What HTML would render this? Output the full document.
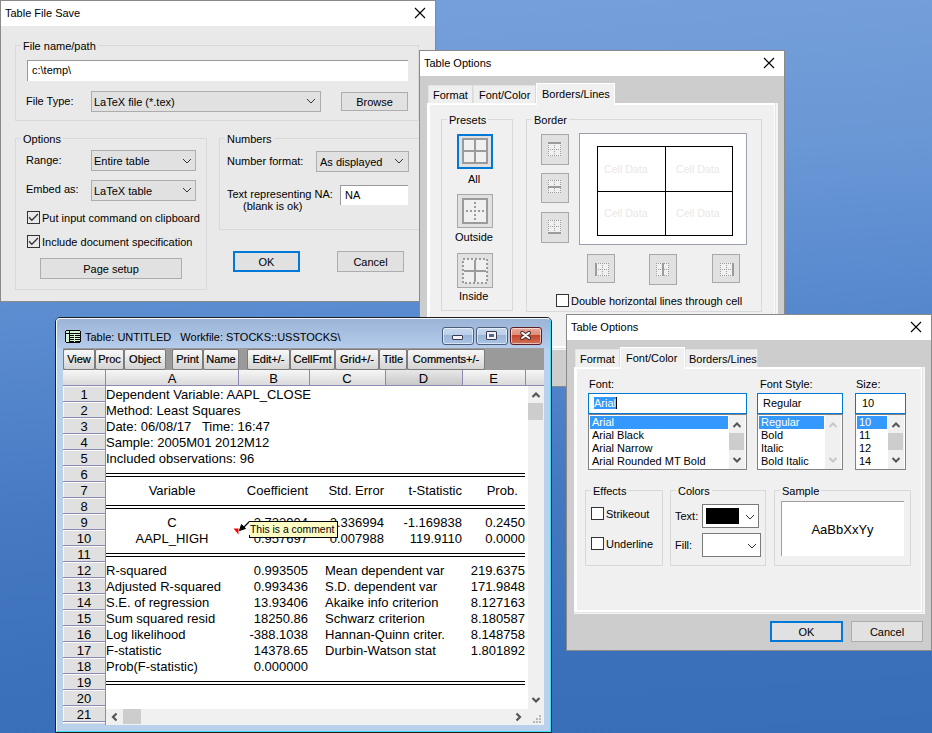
<!DOCTYPE html>
<html><head><meta charset="utf-8">
<style>
*{margin:0;padding:0;box-sizing:border-box}
html,body{width:932px;height:733px;overflow:hidden}
body{position:relative;font-family:"Liberation Sans",sans-serif;font-size:11px;color:#000;
background:linear-gradient(176deg,#77a1db 0%,#6a97d5 25%,#5a8bd0 42%,#4579c2 65%,#3b71bb 85%,#386eb8 100%)}
.a{position:absolute}
.t{position:absolute;white-space:pre;line-height:13px;font-size:11px}
.win{position:absolute;border:1px solid #8a8a8a;background:#e9e9e9}
.ttl{position:absolute;left:0;top:0;right:0;height:25px;background:#fff}
.grp{position:absolute;border:1px solid #d9d9d9}
.glab{position:absolute;white-space:pre;line-height:13px;font-size:11px;padding:0 2px;background:inherit}
.btn{position:absolute;background:#e1e1e1;border:1px solid #adadad;text-align:center;line-height:21px;font-size:11px;white-space:pre}
.def{border:2px solid #0078d7;line-height:19px}
.cmb{position:absolute;background:#e1e1e1;border:1px solid #adadad;white-space:pre;line-height:20px;font-size:11px;padding-left:2px}
.edt{position:absolute;background:#fff;border-top:1px solid #9a9a9a;border-left:1px solid #9a9a9a;white-space:pre;line-height:19px;font-size:11px}
.chk{position:absolute;width:13px;height:13px;border:1px solid #333;background:#fff}
.chev{position:absolute}
</style></head><body>

<!-- ============ Dialog 1: Table File Save ============ -->
<div class="win" style="left:0;top:0;width:436px;height:302px"></div>
<div class="a" style="left:1px;top:1px;width:434px;height:25px;background:#fff"></div>
<div class="t" style="left:5px;top:7px">Table File Save</div>
<svg class="a" style="left:414px;top:7px" width="12" height="12"><path d="M1 1L11 11M11 1L1 11" stroke="#000" stroke-width="1.1"/></svg>

<div class="grp" style="left:15px;top:45px;width:404px;height:76px"></div>
<div class="t" style="left:21px;top:40px;background:#e9e9e9;padding:0 2px">File name/path</div>
<div class="edt" style="left:27px;top:60px;width:381px;height:21px;padding-left:4px">c:\temp\</div>
<div class="t" style="left:26px;top:95px">File Type:</div>
<div class="cmb" style="left:91px;top:91px;width:230px;height:21px">LaTeX file (*.tex)</div>

<div class="btn" style="left:341px;top:92px;width:67px;height:19px;line-height:19px">Browse</div>

<div class="grp" style="left:15px;top:138px;width:192px;height:152px"></div>
<div class="t" style="left:21px;top:133px;background:#e9e9e9;padding:0 2px">Options</div>
<div class="t" style="left:26px;top:154px">Range:</div>
<div class="cmb" style="left:91px;top:150px;width:105px;height:21px">Entire table</div>
<div class="t" style="left:26px;top:183px">Embed as:</div>
<div class="cmb" style="left:91px;top:180px;width:105px;height:21px">LaTeX table</div>
<div class="chk" style="left:27px;top:211px;background:transparent"></div><svg class="a" style="left:27px;top:211px" width="13" height="13"><path d="M2 6.3L4.8 9.2L11 3" fill="none" stroke="#333" stroke-width="1.3"/></svg>
<div class="t" style="left:42px;top:212px">Put input command on clipboard</div>
<div class="chk" style="left:27px;top:235px;background:transparent"></div><svg class="a" style="left:27px;top:235px" width="13" height="13"><path d="M2 6.3L4.8 9.2L11 3" fill="none" stroke="#333" stroke-width="1.3"/></svg>
<div class="t" style="left:42px;top:236px">Include document specification</div>
<div class="btn" style="left:40px;top:258px;width:142px;height:21px">Page setup</div>

<div class="grp" style="left:219px;top:138px;width:220px;height:92px"></div>
<div class="t" style="left:225px;top:133px;background:#e9e9e9;padding:0 2px">Numbers</div>
<div class="t" style="left:227px;top:155px">Number format:</div>
<div class="cmb" style="left:316px;top:151px;width:93px;height:21px;padding-left:3px">As displayed</div>
<div class="t" style="left:227px;top:188px">Text representing NA:</div>
<div class="t" style="left:243px;top:200px">(blank is ok)</div>
<div class="edt" style="left:340px;top:185px;width:68px;height:20px;padding-left:4px">NA</div>
<svg class="a" style="left:306px;top:98px" width="10" height="6"><path d="M1 1L5 5L9 1" fill="none" stroke="#333" stroke-width="1"/></svg><svg class="a" style="left:182px;top:158px" width="10" height="6"><path d="M1 1L5 5L9 1" fill="none" stroke="#333" stroke-width="1"/></svg><svg class="a" style="left:182px;top:187px" width="10" height="6"><path d="M1 1L5 5L9 1" fill="none" stroke="#333" stroke-width="1"/></svg><svg class="a" style="left:394px;top:158px" width="10" height="6"><path d="M1 1L5 5L9 1" fill="none" stroke="#333" stroke-width="1"/></svg>
<div class="btn def" style="left:233px;top:251px;width:67px;height:21px">OK</div>
<div class="btn" style="left:337px;top:251px;width:67px;height:21px">Cancel</div>


<!-- ============ Dialog 2: Table Options (Borders/Lines) ============ -->
<div class="win" style="left:419px;top:50px;width:366px;height:337px;background:#cdcdcd"></div>
<div class="a" style="left:420px;top:51px;width:364px;height:25px;background:#fff"></div>
<div class="t" style="left:424px;top:57px">Table Options</div>
<svg class="a" style="left:763px;top:57px" width="12" height="12"><path d="M1 1L11 11M11 1L1 11" stroke="#000" stroke-width="1.1"/></svg>
<!-- tabs -->
<div class="a" style="left:427px;top:103px;width:351px;height:247px;background:#f5f5f5"></div>
<div class="a" style="left:427px;top:103px;width:349px;height:246px;background:#e3e3e3"></div>
<div class="a" style="left:427px;top:103px;width:348px;height:245px;background:#fff"></div>
<div class="a" style="left:430px;top:105px;width:344px;height:241px;background:#f0f0f0"></div>
<div class="a" style="left:428px;top:85px;width:45px;height:18px;background:#efefef;border-left:1px solid #e3e3e3;border-top:1px solid #e3e3e3;border-right:1px solid #d9d9d9"></div>
<div class="t" style="left:433px;top:89px">Format</div>
<div class="a" style="left:473px;top:85px;width:63px;height:18px;background:#efefef;border-left:1px solid #e3e3e3;border-top:1px solid #e3e3e3;border-right:1px solid #d9d9d9"></div>
<div class="t" style="left:479px;top:89px">Font/Color</div>
<div class="a" style="left:536px;top:83px;width:79px;height:22px;background:#f0f0f0;border:1px solid #fff;border-bottom:none"></div>
<div class="t" style="left:542px;top:88px">Borders/Lines</div>

<div class="grp" style="left:441px;top:119px;width:72px;height:192px"></div>
<div class="t" style="left:447px;top:114px;background:#f0f0f0;padding:0 2px">Presets</div>
<div class="grp" style="left:526px;top:119px;width:236px;height:193px"></div>
<div class="t" style="left:532px;top:114px;background:#f0f0f0;padding:0 2px">Border</div>

<!-- presets -->
<div class="a" style="left:457px;top:134px;width:36px;height:35px;border:2px solid #0078d7;background:#e1e1e1"></div>
<svg class="a" style="left:462px;top:138px" width="26" height="26"><rect x="1" y="1" width="24" height="24" fill="#f0f0f0" stroke="#9b9b9b" stroke-width="2"/><path d="M13 1V25M1 13H25" stroke="#9b9b9b" stroke-width="2"/></svg>
<div class="t" style="left:468px;top:173px">All</div>
<div class="a" style="left:457px;top:194px;width:36px;height:34px;border:1px solid #a8a8a8;background:#e1e1e1"></div>
<svg class="a" style="left:462px;top:198px" width="26" height="26"><rect x="1" y="1" width="24" height="24" fill="#f0f0f0" stroke="#9b9b9b" stroke-width="2"/><path d="M13 4V22M4 13H22" stroke="#9b9b9b" stroke-width="2" stroke-dasharray="2 2"/></svg>
<div class="t" style="left:455px;top:231px">Outside</div>
<div class="a" style="left:457px;top:253px;width:36px;height:35px;border:1px solid #a8a8a8;background:#e1e1e1"></div>
<svg class="a" style="left:462px;top:258px" width="26" height="26"><rect x="1" y="1" width="24" height="24" fill="#f0f0f0" stroke="#9b9b9b" stroke-width="2" stroke-dasharray="2 2"/><path d="M13 2V24M2 13H24" stroke="#9b9b9b" stroke-width="2"/></svg>
<div class="t" style="left:459px;top:290px">Inside</div>

<!-- border buttons -->
<div class="a" style="left:541px;top:134px;width:28px;height:31px;border:1px solid #a8a8a8;background:#e1e1e1"></div><svg class="a" style="left:544px;top:139px" width="22" height="22"><g transform="translate(4,4)" fill="#9b9b9b"><rect x="0" y="0" width="13" height="13" fill="#f0f0f0"/><rect x="0" y="0" width="1" height="1"/><rect x="0" y="2" width="1" height="1"/><rect x="0" y="4" width="1" height="1"/><rect x="0" y="6" width="1" height="1"/><rect x="0" y="8" width="1" height="1"/><rect x="0" y="10" width="1" height="1"/><rect x="0" y="12" width="1" height="1"/><rect x="2" y="0" width="1" height="1"/><rect x="2" y="6" width="1" height="1"/><rect x="2" y="12" width="1" height="1"/><rect x="4" y="0" width="1" height="1"/><rect x="4" y="6" width="1" height="1"/><rect x="4" y="12" width="1" height="1"/><rect x="6" y="0" width="1" height="1"/><rect x="6" y="2" width="1" height="1"/><rect x="6" y="4" width="1" height="1"/><rect x="6" y="6" width="1" height="1"/><rect x="6" y="8" width="1" height="1"/><rect x="6" y="10" width="1" height="1"/><rect x="6" y="12" width="1" height="1"/><rect x="8" y="0" width="1" height="1"/><rect x="8" y="6" width="1" height="1"/><rect x="8" y="12" width="1" height="1"/><rect x="10" y="0" width="1" height="1"/><rect x="10" y="6" width="1" height="1"/><rect x="10" y="12" width="1" height="1"/><rect x="12" y="0" width="1" height="1"/><rect x="12" y="2" width="1" height="1"/><rect x="12" y="4" width="1" height="1"/><rect x="12" y="6" width="1" height="1"/><rect x="12" y="8" width="1" height="1"/><rect x="12" y="10" width="1" height="1"/><rect x="12" y="12" width="1" height="1"/><rect x="0" y="-1" width="13" height="2"/></g></svg>
<div class="a" style="left:541px;top:173px;width:28px;height:30px;border:1px solid #a8a8a8;background:#e1e1e1"></div><svg class="a" style="left:544px;top:176px" width="22" height="22"><g transform="translate(4,4)" fill="#9b9b9b"><rect x="0" y="0" width="13" height="13" fill="#f0f0f0"/><rect x="0" y="0" width="1" height="1"/><rect x="0" y="2" width="1" height="1"/><rect x="0" y="4" width="1" height="1"/><rect x="0" y="6" width="1" height="1"/><rect x="0" y="8" width="1" height="1"/><rect x="0" y="10" width="1" height="1"/><rect x="0" y="12" width="1" height="1"/><rect x="2" y="0" width="1" height="1"/><rect x="2" y="6" width="1" height="1"/><rect x="2" y="12" width="1" height="1"/><rect x="4" y="0" width="1" height="1"/><rect x="4" y="6" width="1" height="1"/><rect x="4" y="12" width="1" height="1"/><rect x="6" y="0" width="1" height="1"/><rect x="6" y="2" width="1" height="1"/><rect x="6" y="4" width="1" height="1"/><rect x="6" y="6" width="1" height="1"/><rect x="6" y="8" width="1" height="1"/><rect x="6" y="10" width="1" height="1"/><rect x="6" y="12" width="1" height="1"/><rect x="8" y="0" width="1" height="1"/><rect x="8" y="6" width="1" height="1"/><rect x="8" y="12" width="1" height="1"/><rect x="10" y="0" width="1" height="1"/><rect x="10" y="6" width="1" height="1"/><rect x="10" y="12" width="1" height="1"/><rect x="12" y="0" width="1" height="1"/><rect x="12" y="2" width="1" height="1"/><rect x="12" y="4" width="1" height="1"/><rect x="12" y="6" width="1" height="1"/><rect x="12" y="8" width="1" height="1"/><rect x="12" y="10" width="1" height="1"/><rect x="12" y="12" width="1" height="1"/><rect x="0" y="6" width="13" height="2"/></g></svg>
<div class="a" style="left:541px;top:212px;width:28px;height:31px;border:1px solid #a8a8a8;background:#e1e1e1"></div><svg class="a" style="left:544px;top:216px" width="22" height="22"><g transform="translate(4,4)" fill="#9b9b9b"><rect x="0" y="0" width="13" height="13" fill="#f0f0f0"/><rect x="0" y="0" width="1" height="1"/><rect x="0" y="2" width="1" height="1"/><rect x="0" y="4" width="1" height="1"/><rect x="0" y="6" width="1" height="1"/><rect x="0" y="8" width="1" height="1"/><rect x="0" y="10" width="1" height="1"/><rect x="0" y="12" width="1" height="1"/><rect x="2" y="0" width="1" height="1"/><rect x="2" y="6" width="1" height="1"/><rect x="2" y="12" width="1" height="1"/><rect x="4" y="0" width="1" height="1"/><rect x="4" y="6" width="1" height="1"/><rect x="4" y="12" width="1" height="1"/><rect x="6" y="0" width="1" height="1"/><rect x="6" y="2" width="1" height="1"/><rect x="6" y="4" width="1" height="1"/><rect x="6" y="6" width="1" height="1"/><rect x="6" y="8" width="1" height="1"/><rect x="6" y="10" width="1" height="1"/><rect x="6" y="12" width="1" height="1"/><rect x="8" y="0" width="1" height="1"/><rect x="8" y="6" width="1" height="1"/><rect x="8" y="12" width="1" height="1"/><rect x="10" y="0" width="1" height="1"/><rect x="10" y="6" width="1" height="1"/><rect x="10" y="12" width="1" height="1"/><rect x="12" y="0" width="1" height="1"/><rect x="12" y="2" width="1" height="1"/><rect x="12" y="4" width="1" height="1"/><rect x="12" y="6" width="1" height="1"/><rect x="12" y="8" width="1" height="1"/><rect x="12" y="10" width="1" height="1"/><rect x="12" y="12" width="1" height="1"/><rect x="0" y="12" width="13" height="2"/></g></svg>
<div class="a" style="left:587px;top:254px;width:28px;height:29px;border:1px solid #a8a8a8;background:#e1e1e1"></div><svg class="a" style="left:592px;top:259px" width="22" height="22"><g transform="translate(4,4)" fill="#9b9b9b"><rect x="0" y="0" width="13" height="13" fill="#f0f0f0"/><rect x="0" y="0" width="1" height="1"/><rect x="0" y="2" width="1" height="1"/><rect x="0" y="4" width="1" height="1"/><rect x="0" y="6" width="1" height="1"/><rect x="0" y="8" width="1" height="1"/><rect x="0" y="10" width="1" height="1"/><rect x="0" y="12" width="1" height="1"/><rect x="2" y="0" width="1" height="1"/><rect x="2" y="6" width="1" height="1"/><rect x="2" y="12" width="1" height="1"/><rect x="4" y="0" width="1" height="1"/><rect x="4" y="6" width="1" height="1"/><rect x="4" y="12" width="1" height="1"/><rect x="6" y="0" width="1" height="1"/><rect x="6" y="2" width="1" height="1"/><rect x="6" y="4" width="1" height="1"/><rect x="6" y="6" width="1" height="1"/><rect x="6" y="8" width="1" height="1"/><rect x="6" y="10" width="1" height="1"/><rect x="6" y="12" width="1" height="1"/><rect x="8" y="0" width="1" height="1"/><rect x="8" y="6" width="1" height="1"/><rect x="8" y="12" width="1" height="1"/><rect x="10" y="0" width="1" height="1"/><rect x="10" y="6" width="1" height="1"/><rect x="10" y="12" width="1" height="1"/><rect x="12" y="0" width="1" height="1"/><rect x="12" y="2" width="1" height="1"/><rect x="12" y="4" width="1" height="1"/><rect x="12" y="6" width="1" height="1"/><rect x="12" y="8" width="1" height="1"/><rect x="12" y="10" width="1" height="1"/><rect x="12" y="12" width="1" height="1"/><rect x="-1" y="0" width="2" height="13"/></g></svg>
<div class="a" style="left:649px;top:254px;width:28px;height:31px;border:1px solid #a8a8a8;background:#e1e1e1"></div><svg class="a" style="left:652px;top:259px" width="22" height="22"><g transform="translate(4,4)" fill="#9b9b9b"><rect x="0" y="0" width="13" height="13" fill="#f0f0f0"/><rect x="0" y="0" width="1" height="1"/><rect x="0" y="2" width="1" height="1"/><rect x="0" y="4" width="1" height="1"/><rect x="0" y="6" width="1" height="1"/><rect x="0" y="8" width="1" height="1"/><rect x="0" y="10" width="1" height="1"/><rect x="0" y="12" width="1" height="1"/><rect x="2" y="0" width="1" height="1"/><rect x="2" y="6" width="1" height="1"/><rect x="2" y="12" width="1" height="1"/><rect x="4" y="0" width="1" height="1"/><rect x="4" y="6" width="1" height="1"/><rect x="4" y="12" width="1" height="1"/><rect x="6" y="0" width="1" height="1"/><rect x="6" y="2" width="1" height="1"/><rect x="6" y="4" width="1" height="1"/><rect x="6" y="6" width="1" height="1"/><rect x="6" y="8" width="1" height="1"/><rect x="6" y="10" width="1" height="1"/><rect x="6" y="12" width="1" height="1"/><rect x="8" y="0" width="1" height="1"/><rect x="8" y="6" width="1" height="1"/><rect x="8" y="12" width="1" height="1"/><rect x="10" y="0" width="1" height="1"/><rect x="10" y="6" width="1" height="1"/><rect x="10" y="12" width="1" height="1"/><rect x="12" y="0" width="1" height="1"/><rect x="12" y="2" width="1" height="1"/><rect x="12" y="4" width="1" height="1"/><rect x="12" y="6" width="1" height="1"/><rect x="12" y="8" width="1" height="1"/><rect x="12" y="10" width="1" height="1"/><rect x="12" y="12" width="1" height="1"/><rect x="6" y="0" width="2" height="13"/></g></svg>
<div class="a" style="left:712px;top:254px;width:28px;height:29px;border:1px solid #a8a8a8;background:#e1e1e1"></div><svg class="a" style="left:716px;top:259px" width="22" height="22"><g transform="translate(4,4)" fill="#9b9b9b"><rect x="0" y="0" width="13" height="13" fill="#f0f0f0"/><rect x="0" y="0" width="1" height="1"/><rect x="0" y="2" width="1" height="1"/><rect x="0" y="4" width="1" height="1"/><rect x="0" y="6" width="1" height="1"/><rect x="0" y="8" width="1" height="1"/><rect x="0" y="10" width="1" height="1"/><rect x="0" y="12" width="1" height="1"/><rect x="2" y="0" width="1" height="1"/><rect x="2" y="6" width="1" height="1"/><rect x="2" y="12" width="1" height="1"/><rect x="4" y="0" width="1" height="1"/><rect x="4" y="6" width="1" height="1"/><rect x="4" y="12" width="1" height="1"/><rect x="6" y="0" width="1" height="1"/><rect x="6" y="2" width="1" height="1"/><rect x="6" y="4" width="1" height="1"/><rect x="6" y="6" width="1" height="1"/><rect x="6" y="8" width="1" height="1"/><rect x="6" y="10" width="1" height="1"/><rect x="6" y="12" width="1" height="1"/><rect x="8" y="0" width="1" height="1"/><rect x="8" y="6" width="1" height="1"/><rect x="8" y="12" width="1" height="1"/><rect x="10" y="0" width="1" height="1"/><rect x="10" y="6" width="1" height="1"/><rect x="10" y="12" width="1" height="1"/><rect x="12" y="0" width="1" height="1"/><rect x="12" y="2" width="1" height="1"/><rect x="12" y="4" width="1" height="1"/><rect x="12" y="6" width="1" height="1"/><rect x="12" y="8" width="1" height="1"/><rect x="12" y="10" width="1" height="1"/><rect x="12" y="12" width="1" height="1"/><rect x="12" y="0" width="2" height="13"/></g></svg>

<!-- preview -->
<div class="a" style="left:579px;top:133px;width:168px;height:112px;background:#fff;border:1px solid #9aa0ac"></div>
<div class="a" style="left:597px;top:146px;width:136px;height:90px;border:1px solid #000"></div>
<div class="a" style="left:665px;top:146px;width:1px;height:90px;background:#000"></div>
<div class="a" style="left:597px;top:191px;width:136px;height:1px;background:#000"></div>
<div class="t" style="left:604px;top:163px;color:#e8e8e8;font-size:10.6px">Cell Data</div>
<div class="t" style="left:676px;top:163px;color:#e8e8e8;font-size:10.6px">Cell Data</div>
<div class="t" style="left:604px;top:207px;color:#e8e8e8;font-size:10.6px">Cell Data</div>
<div class="t" style="left:676px;top:207px;color:#e8e8e8;font-size:10.6px">Cell Data</div>
<div class="chk" style="left:556px;top:294px"></div>
<div class="t" style="left:571px;top:295px">Double horizontal lines through cell</div>



<!-- ============ EViews table window ============ -->
<div class="a" style="left:55px;top:317px;width:497px;height:416px;border:1px solid #1e1e1e;border-radius:5px 5px 0 0;background:#b9d1ea;overflow:hidden">
 <div class="a" style="left:0;top:0;width:495px;height:31px;background:linear-gradient(#9ab3d6,#b6cdec)"></div>
 <div class="a" style="left:0;top:0;width:495px;height:414px;border-left:1px solid #f4f8fc;border-top:1px solid #f4f8fc;border-right:1px solid #40dcf8;border-bottom:1px solid #40dcf8;border-radius:4px 4px 0 0"></div>
</div>
<svg class="a" style="left:65px;top:330px" width="16" height="13" shape-rendering="crispEdges"><rect x="1" y="0" width="14" height="13" fill="#000"/><rect x="0" y="1" width="16" height="11" fill="#000"/><rect x="1" y="1" width="3" height="2" fill="#d2f5d2"/><rect x="1" y="4" width="3" height="8" fill="#d2f5d2"/><rect x="5" y="1" width="10" height="2" fill="#d2f5d2"/><rect x="5" y="4" width="10" height="1" fill="#d2f5d2"/><rect x="5" y="6" width="10" height="1" fill="#d2f5d2"/><rect x="5" y="8" width="10" height="1" fill="#d2f5d2"/><rect x="5" y="10" width="10" height="1" fill="#d2f5d2"/><rect x="9" y="4" width="1" height="8" fill="#d2f5d2"/></svg>
<div class="t" style="left:85px;top:331px;font-size:11px">Table: UNTITLED   Workfile: STOCKS::USSTOCKS\</div>

<div class="a" style="left:442px;top:327px;width:32px;height:18px;border:1px solid #4e5e78;border-radius:3px;background:linear-gradient(#c6d8ee 0%,#bcd0ea 42%,#9ab5d8 46%,#a9c4e6 100%);box-shadow:inset 0 0 0 1px rgba(255,255,255,0.55)"></div><div class="a" style="left:476px;top:327px;width:32px;height:18px;border:1px solid #4e5e78;border-radius:3px;background:linear-gradient(#c6d8ee 0%,#bcd0ea 42%,#9ab5d8 46%,#a9c4e6 100%);box-shadow:inset 0 0 0 1px rgba(255,255,255,0.55)"></div><div class="a" style="left:510px;top:327px;width:32px;height:18px;border:1px solid #5a1e24;border-radius:3px;background:linear-gradient(#eaa898 0%,#dc8f7c 42%,#c4452a 46%,#d0705a 100%);box-shadow:inset 0 0 0 1px rgba(255,255,255,0.55)"></div>
<div class="a" style="left:452px;top:335px;width:11px;height:5px;background:#f2f2f2;border:1px solid #3a3a50;border-radius:1px"></div>
<div class="a" style="left:486px;top:331px;width:11px;height:9px;background:#f2f2f2;border:1px solid #3a3a50;border-radius:1px"><div class="a" style="left:2px;top:2px;width:5px;height:3px;background:#4e6a94"></div></div>
<svg class="a" style="left:518px;top:329px" width="16" height="14"><path d="M4.2 3.8L11 9M11 3.8L4.2 9" stroke="#3a2428" stroke-width="4" stroke-linecap="round"/><path d="M4.2 3.8L11 9M11 3.8L4.2 9" stroke="#f4f4f4" stroke-width="2.2" stroke-linecap="round"/></svg>
<div class="a" style="left:63px;top:348px;width:481px;height:22px;background:#9a9a9a"></div>
<div class="a" style="left:63px;top:349px;width:32px;height:21px;border:1px solid #7c7c7c;border-radius:2px;background:linear-gradient(#f8f8f8,#e6e6e6 50%,#d4d4d4);text-align:center;line-height:19px;font-size:11px;white-space:pre;-webkit-text-stroke:0.2px #000">View</div>
<div class="a" style="left:95px;top:349px;width:29px;height:21px;border:1px solid #7c7c7c;border-radius:2px;background:linear-gradient(#f8f8f8,#e6e6e6 50%,#d4d4d4);text-align:center;line-height:19px;font-size:11px;white-space:pre;-webkit-text-stroke:0.2px #000">Proc</div>
<div class="a" style="left:124px;top:349px;width:42px;height:21px;border:1px solid #7c7c7c;border-radius:2px;background:linear-gradient(#f8f8f8,#e6e6e6 50%,#d4d4d4);text-align:center;line-height:19px;font-size:11px;white-space:pre;-webkit-text-stroke:0.2px #000">Object</div>
<div class="a" style="left:172px;top:349px;width:31px;height:21px;border:1px solid #7c7c7c;border-radius:2px;background:linear-gradient(#f8f8f8,#e6e6e6 50%,#d4d4d4);text-align:center;line-height:19px;font-size:11px;white-space:pre;-webkit-text-stroke:0.2px #000">Print</div>
<div class="a" style="left:203px;top:349px;width:36px;height:21px;border:1px solid #7c7c7c;border-radius:2px;background:linear-gradient(#f8f8f8,#e6e6e6 50%,#d4d4d4);text-align:center;line-height:19px;font-size:11px;white-space:pre;-webkit-text-stroke:0.2px #000">Name</div>
<div class="a" style="left:247px;top:349px;width:43px;height:21px;border:1px solid #7c7c7c;border-radius:2px;background:linear-gradient(#f8f8f8,#e6e6e6 50%,#d4d4d4);text-align:center;line-height:19px;font-size:11px;white-space:pre;-webkit-text-stroke:0.2px #000">Edit+/-</div>
<div class="a" style="left:290px;top:349px;width:45px;height:21px;border:1px solid #7c7c7c;border-radius:2px;background:linear-gradient(#f8f8f8,#e6e6e6 50%,#d4d4d4);text-align:center;line-height:19px;font-size:11px;white-space:pre;-webkit-text-stroke:0.2px #000">CellFmt</div>
<div class="a" style="left:335px;top:349px;width:44px;height:21px;border:1px solid #7c7c7c;border-radius:2px;background:linear-gradient(#f8f8f8,#e6e6e6 50%,#d4d4d4);text-align:center;line-height:19px;font-size:11px;white-space:pre;-webkit-text-stroke:0.2px #000">Grid+/-</div>
<div class="a" style="left:379px;top:349px;width:28px;height:21px;border:1px solid #7c7c7c;border-radius:2px;background:linear-gradient(#f8f8f8,#e6e6e6 50%,#d4d4d4);text-align:center;line-height:19px;font-size:11px;white-space:pre;-webkit-text-stroke:0.2px #000">Title</div>
<div class="a" style="left:407px;top:349px;width:78px;height:21px;border:1px solid #7c7c7c;border-radius:2px;background:linear-gradient(#f8f8f8,#e6e6e6 50%,#d4d4d4);text-align:center;line-height:19px;font-size:11px;white-space:pre;-webkit-text-stroke:0.2px #000">Comments+/-</div>
<div class="a" style="left:63px;top:370px;width:481px;height:16px;background:linear-gradient(#f6f6f6,#dadada);border-bottom:1px solid #8a8ab4"></div>
<div class="a" style="left:385px;top:370px;width:77px;height:15px;background:linear-gradient(#e8e8e8,#c8c8c8)"></div>
<div class="a" style="left:106px;top:371px;width:132px;height:15px;text-align:center;font-size:13px;line-height:15px">A</div>
<div class="a" style="left:238px;top:371px;width:71px;height:15px;text-align:center;font-size:13px;line-height:15px">B</div>
<div class="a" style="left:309px;top:371px;width:76px;height:15px;text-align:center;font-size:13px;line-height:15px">C</div>
<div class="a" style="left:385px;top:371px;width:77px;height:15px;text-align:center;font-size:13px;line-height:15px">D</div>
<div class="a" style="left:462px;top:371px;width:63px;height:15px;text-align:center;font-size:13px;line-height:15px">E</div>
<div class="a" style="left:105px;top:370px;width:1px;height:15px;background:#8a8ab4"></div>
<div class="a" style="left:238px;top:370px;width:1px;height:15px;background:#8a8ab4"></div>
<div class="a" style="left:309px;top:370px;width:1px;height:15px;background:#8a8ab4"></div>
<div class="a" style="left:385px;top:370px;width:1px;height:15px;background:#8a8ab4"></div>
<div class="a" style="left:462px;top:370px;width:1px;height:15px;background:#8a8ab4"></div>
<div class="a" style="left:525px;top:370px;width:1px;height:15px;background:#8a8ab4"></div>
<div class="a" style="left:105px;top:385px;width:1px;height:340px;background:#8a8ab4"></div>
<div class="a" style="left:106px;top:386px;width:422px;height:323px;background:#fff"></div>
<div class="a" style="left:63px;top:385px;width:42px;height:16px;border-top:1px solid #8a8ab4;background:#e0e0e0;box-shadow:inset 1px 1px 0 #fafafa"></div>
<div class="a" style="left:63px;top:387px;width:42px;height:15px;text-align:center;font-size:13px;line-height:16px">1</div>
<div class="a" style="left:63px;top:401px;width:42px;height:16px;border-top:1px solid #8a8ab4;background:#e0e0e0;box-shadow:inset 1px 1px 0 #fafafa"></div>
<div class="a" style="left:63px;top:403px;width:42px;height:15px;text-align:center;font-size:13px;line-height:16px">2</div>
<div class="a" style="left:63px;top:417px;width:42px;height:16px;border-top:1px solid #8a8ab4;background:#e0e0e0;box-shadow:inset 1px 1px 0 #fafafa"></div>
<div class="a" style="left:63px;top:419px;width:42px;height:15px;text-align:center;font-size:13px;line-height:16px">3</div>
<div class="a" style="left:63px;top:433px;width:42px;height:16px;border-top:1px solid #8a8ab4;background:#e0e0e0;box-shadow:inset 1px 1px 0 #fafafa"></div>
<div class="a" style="left:63px;top:435px;width:42px;height:15px;text-align:center;font-size:13px;line-height:16px">4</div>
<div class="a" style="left:63px;top:449px;width:42px;height:16px;border-top:1px solid #8a8ab4;background:#e0e0e0;box-shadow:inset 1px 1px 0 #fafafa"></div>
<div class="a" style="left:63px;top:451px;width:42px;height:15px;text-align:center;font-size:13px;line-height:16px">5</div>
<div class="a" style="left:63px;top:465px;width:42px;height:16px;border-top:1px solid #8a8ab4;background:#e0e0e0;box-shadow:inset 1px 1px 0 #fafafa"></div>
<div class="a" style="left:63px;top:467px;width:42px;height:15px;text-align:center;font-size:13px;line-height:16px">6</div>
<div class="a" style="left:63px;top:481px;width:42px;height:16px;border-top:1px solid #8a8ab4;background:#e0e0e0;box-shadow:inset 1px 1px 0 #fafafa"></div>
<div class="a" style="left:63px;top:483px;width:42px;height:15px;text-align:center;font-size:13px;line-height:16px">7</div>
<div class="a" style="left:63px;top:497px;width:42px;height:16px;border-top:1px solid #8a8ab4;background:#e0e0e0;box-shadow:inset 1px 1px 0 #fafafa"></div>
<div class="a" style="left:63px;top:499px;width:42px;height:15px;text-align:center;font-size:13px;line-height:16px">8</div>
<div class="a" style="left:63px;top:513px;width:42px;height:16px;border-top:1px solid #8a8ab4;background:#e0e0e0;box-shadow:inset 1px 1px 0 #fafafa"></div>
<div class="a" style="left:63px;top:515px;width:42px;height:15px;text-align:center;font-size:13px;line-height:16px">9</div>
<div class="a" style="left:63px;top:529px;width:42px;height:16px;border-top:1px solid #8a8ab4;background:#e0e0e0;box-shadow:inset 1px 1px 0 #fafafa"></div>
<div class="a" style="left:63px;top:531px;width:42px;height:15px;text-align:center;font-size:13px;line-height:16px">10</div>
<div class="a" style="left:63px;top:545px;width:42px;height:16px;border-top:1px solid #8a8ab4;background:#e0e0e0;box-shadow:inset 1px 1px 0 #fafafa"></div>
<div class="a" style="left:63px;top:547px;width:42px;height:15px;text-align:center;font-size:13px;line-height:16px">11</div>
<div class="a" style="left:63px;top:561px;width:42px;height:16px;border-top:1px solid #8a8ab4;background:#e0e0e0;box-shadow:inset 1px 1px 0 #fafafa"></div>
<div class="a" style="left:63px;top:563px;width:42px;height:15px;text-align:center;font-size:13px;line-height:16px">12</div>
<div class="a" style="left:63px;top:577px;width:42px;height:16px;border-top:1px solid #8a8ab4;background:#e0e0e0;box-shadow:inset 1px 1px 0 #fafafa"></div>
<div class="a" style="left:63px;top:579px;width:42px;height:15px;text-align:center;font-size:13px;line-height:16px">13</div>
<div class="a" style="left:63px;top:593px;width:42px;height:16px;border-top:1px solid #8a8ab4;background:#e0e0e0;box-shadow:inset 1px 1px 0 #fafafa"></div>
<div class="a" style="left:63px;top:595px;width:42px;height:15px;text-align:center;font-size:13px;line-height:16px">14</div>
<div class="a" style="left:63px;top:609px;width:42px;height:16px;border-top:1px solid #8a8ab4;background:#e0e0e0;box-shadow:inset 1px 1px 0 #fafafa"></div>
<div class="a" style="left:63px;top:611px;width:42px;height:15px;text-align:center;font-size:13px;line-height:16px">15</div>
<div class="a" style="left:63px;top:625px;width:42px;height:16px;border-top:1px solid #8a8ab4;background:#e0e0e0;box-shadow:inset 1px 1px 0 #fafafa"></div>
<div class="a" style="left:63px;top:627px;width:42px;height:15px;text-align:center;font-size:13px;line-height:16px">16</div>
<div class="a" style="left:63px;top:641px;width:42px;height:16px;border-top:1px solid #8a8ab4;background:#e0e0e0;box-shadow:inset 1px 1px 0 #fafafa"></div>
<div class="a" style="left:63px;top:643px;width:42px;height:15px;text-align:center;font-size:13px;line-height:16px">17</div>
<div class="a" style="left:63px;top:657px;width:42px;height:16px;border-top:1px solid #8a8ab4;background:#e0e0e0;box-shadow:inset 1px 1px 0 #fafafa"></div>
<div class="a" style="left:63px;top:659px;width:42px;height:15px;text-align:center;font-size:13px;line-height:16px">18</div>
<div class="a" style="left:63px;top:673px;width:42px;height:16px;border-top:1px solid #8a8ab4;background:#e0e0e0;box-shadow:inset 1px 1px 0 #fafafa"></div>
<div class="a" style="left:63px;top:675px;width:42px;height:15px;text-align:center;font-size:13px;line-height:16px">19</div>
<div class="a" style="left:63px;top:689px;width:42px;height:16px;border-top:1px solid #8a8ab4;background:#e0e0e0;box-shadow:inset 1px 1px 0 #fafafa"></div>
<div class="a" style="left:63px;top:691px;width:42px;height:15px;text-align:center;font-size:13px;line-height:16px">20</div>
<div class="a" style="left:63px;top:705px;width:42px;height:16px;border-top:1px solid #8a8ab4;background:#e0e0e0;box-shadow:inset 1px 1px 0 #fafafa"></div>
<div class="a" style="left:63px;top:707px;width:42px;height:15px;text-align:center;font-size:13px;line-height:16px">21</div>
<div class="a" style="left:63px;top:721px;width:42px;height:3px;border-top:1px solid #8a8ab4;background:#e0e0e0;box-shadow:inset 1px 1px 0 #fafafa"></div>
<div class="a" style="left:106px;top:387px;font-size:13px;line-height:16px;white-space:pre">Dependent Variable: AAPL_CLOSE</div>
<div class="a" style="left:106px;top:403px;font-size:13px;line-height:16px;white-space:pre">Method: Least Squares</div>
<div class="a" style="left:106px;top:419px;font-size:13px;line-height:16px;white-space:pre">Date: 06/08/17   Time: 16:47</div>
<div class="a" style="left:106px;top:435px;font-size:13px;line-height:16px;white-space:pre">Sample: 2005M01 2012M12</div>
<div class="a" style="left:106px;top:451px;font-size:13px;line-height:16px;white-space:pre">Included observations: 96</div>
<div class="a" style="left:106px;top:483px;width:132px;text-align:center;font-size:13px;line-height:16px;white-space:pre">Variable</div>
<div class="a" style="left:178px;top:483px;width:130px;text-align:right;font-size:13px;line-height:16px;white-space:pre">Coefficient</div>
<div class="a" style="left:249px;top:483px;width:135px;text-align:right;font-size:13px;line-height:16px;white-space:pre">Std. Error</div>
<div class="a" style="left:325px;top:483px;width:137px;text-align:right;font-size:13px;line-height:16px;white-space:pre">t-Statistic</div>
<div class="a" style="left:402px;top:483px;width:123px;text-align:right;font-size:13px;line-height:16px;white-space:pre">Prob.  </div>
<div class="a" style="left:106px;top:515px;width:132px;text-align:center;font-size:13px;line-height:16px;white-space:pre">C</div>
<div class="a" style="left:178px;top:515px;width:130px;text-align:right;font-size:13px;line-height:16px;white-space:pre">-2.733904</div>
<div class="a" style="left:249px;top:515px;width:135px;text-align:right;font-size:13px;line-height:16px;white-space:pre">2.336994</div>
<div class="a" style="left:325px;top:515px;width:137px;text-align:right;font-size:13px;line-height:16px;white-space:pre">-1.169838</div>
<div class="a" style="left:402px;top:515px;width:123px;text-align:right;font-size:13px;line-height:16px;white-space:pre">0.2450</div>
<div class="a" style="left:106px;top:531px;width:132px;text-align:center;font-size:13px;line-height:16px;white-space:pre">AAPL_HIGH</div>
<div class="a" style="left:178px;top:531px;width:130px;text-align:right;font-size:13px;line-height:16px;white-space:pre">0.957697</div>
<div class="a" style="left:249px;top:531px;width:135px;text-align:right;font-size:13px;line-height:16px;white-space:pre">0.007988</div>
<div class="a" style="left:325px;top:531px;width:137px;text-align:right;font-size:13px;line-height:16px;white-space:pre">119.9110</div>
<div class="a" style="left:402px;top:531px;width:123px;text-align:right;font-size:13px;line-height:16px;white-space:pre">0.0000</div>
<div class="a" style="left:106px;top:563px;font-size:13px;line-height:16px;white-space:pre">R-squared</div>
<div class="a" style="left:178px;top:563px;width:130px;text-align:right;font-size:13px;line-height:16px;white-space:pre">0.993505</div>
<div class="a" style="left:325px;top:563px;font-size:13px;line-height:16px;white-space:pre">Mean dependent var</div>
<div class="a" style="left:402px;top:563px;width:123px;text-align:right;font-size:13px;line-height:16px;white-space:pre">219.6375</div>
<div class="a" style="left:106px;top:579px;font-size:13px;line-height:16px;white-space:pre">Adjusted R-squared</div>
<div class="a" style="left:178px;top:579px;width:130px;text-align:right;font-size:13px;line-height:16px;white-space:pre">0.993436</div>
<div class="a" style="left:325px;top:579px;font-size:13px;line-height:16px;white-space:pre">S.D. dependent var</div>
<div class="a" style="left:402px;top:579px;width:123px;text-align:right;font-size:13px;line-height:16px;white-space:pre">171.9848</div>
<div class="a" style="left:106px;top:595px;font-size:13px;line-height:16px;white-space:pre">S.E. of regression</div>
<div class="a" style="left:178px;top:595px;width:130px;text-align:right;font-size:13px;line-height:16px;white-space:pre">13.93406</div>
<div class="a" style="left:325px;top:595px;font-size:13px;line-height:16px;white-space:pre">Akaike info criterion</div>
<div class="a" style="left:402px;top:595px;width:123px;text-align:right;font-size:13px;line-height:16px;white-space:pre">8.127163</div>
<div class="a" style="left:106px;top:611px;font-size:13px;line-height:16px;white-space:pre">Sum squared resid</div>
<div class="a" style="left:178px;top:611px;width:130px;text-align:right;font-size:13px;line-height:16px;white-space:pre">18250.86</div>
<div class="a" style="left:325px;top:611px;font-size:13px;line-height:16px;white-space:pre">Schwarz criterion</div>
<div class="a" style="left:402px;top:611px;width:123px;text-align:right;font-size:13px;line-height:16px;white-space:pre">8.180587</div>
<div class="a" style="left:106px;top:627px;font-size:13px;line-height:16px;white-space:pre">Log likelihood</div>
<div class="a" style="left:178px;top:627px;width:130px;text-align:right;font-size:13px;line-height:16px;white-space:pre">-388.1038</div>
<div class="a" style="left:325px;top:627px;font-size:13px;line-height:16px;white-space:pre">Hannan-Quinn criter.</div>
<div class="a" style="left:402px;top:627px;width:123px;text-align:right;font-size:13px;line-height:16px;white-space:pre">8.148758</div>
<div class="a" style="left:106px;top:643px;font-size:13px;line-height:16px;white-space:pre">F-statistic</div>
<div class="a" style="left:178px;top:643px;width:130px;text-align:right;font-size:13px;line-height:16px;white-space:pre">14378.65</div>
<div class="a" style="left:325px;top:643px;font-size:13px;line-height:16px;white-space:pre">Durbin-Watson stat</div>
<div class="a" style="left:402px;top:643px;width:123px;text-align:right;font-size:13px;line-height:16px;white-space:pre">1.801892</div>
<div class="a" style="left:106px;top:659px;font-size:13px;line-height:16px;white-space:pre">Prob(F-statistic)</div>
<div class="a" style="left:178px;top:659px;width:130px;text-align:right;font-size:13px;line-height:16px;white-space:pre">0.000000</div>
<div class="a" style="left:106px;top:473px;width:419px;height:1px;background:#000"></div><div class="a" style="left:106px;top:476px;width:419px;height:1px;background:#000"></div>
<div class="a" style="left:106px;top:505px;width:419px;height:1px;background:#000"></div><div class="a" style="left:106px;top:508px;width:419px;height:1px;background:#000"></div>
<div class="a" style="left:106px;top:553px;width:419px;height:1px;background:#000"></div><div class="a" style="left:106px;top:556px;width:419px;height:1px;background:#000"></div>
<div class="a" style="left:106px;top:681px;width:419px;height:1px;background:#000"></div><div class="a" style="left:106px;top:684px;width:419px;height:1px;background:#000"></div>
<div class="a" style="left:528px;top:386px;width:16px;height:323px;background:#f0f0f0"></div>
<div class="a" style="left:528px;top:403px;width:15px;height:17px;background:#cdcdcd"></div>
<svg class="a" style="left:531px;top:391px" width="10" height="8"><path d="M1.5 6L5 2.5L8.5 6" fill="none" stroke="#555" stroke-width="2.2"/></svg>
<svg class="a" style="left:531px;top:696px" width="10" height="8"><path d="M1.5 2L5 5.5L8.5 2" fill="none" stroke="#555" stroke-width="2.2"/></svg>
<div class="a" style="left:106px;top:709px;width:438px;height:16px;background:#f0f0f0"></div>
<div class="a" style="left:123px;top:709px;width:18px;height:15px;background:#cdcdcd"></div>
<svg class="a" style="left:110px;top:712px" width="8" height="10"><path d="M6.5 1.5L3 5L6.5 8.5" fill="none" stroke="#555" stroke-width="2.2"/></svg>
<svg class="a" style="left:515px;top:712px" width="8" height="10"><path d="M1.5 1.5L5 5L1.5 8.5" fill="none" stroke="#555" stroke-width="2.2"/></svg>
<svg class="a" style="left:532px;top:714px" width="10" height="10" fill="#b8b8b8"><rect x="7" y="1" width="2" height="2"/><rect x="4" y="4" width="2" height="2"/><rect x="7" y="4" width="2" height="2"/><rect x="1" y="7" width="2" height="2"/><rect x="4" y="7" width="2" height="2"/><rect x="7" y="7" width="2" height="2"/></svg>
<svg class="a" style="left:233px;top:528px" width="6" height="7"><path d="M0.5 0.5H5.5V6.5Z" fill="#f00"/></svg>
<svg class="a" style="left:238px;top:518px" width="14" height="16"><path d="M11.5 3.5L5 10" stroke="#000" stroke-width="1.2"/><path d="M1.5 12.5L3.5 6.5L7.5 10.5Z" fill="#000" stroke="#000" stroke-width="1"/></svg>
<div class="a" style="left:249px;top:521px;width:89px;height:17px;background:#fdfbc4;border-top:1px solid #000;border-right:1px solid #000;border-bottom:1px solid #000;font-size:10.4px;line-height:15px;padding-left:1px;white-space:pre">This is a comment</div><div class="a" style="left:249px;top:535px;width:1px;height:3px;background:#000"></div>
<!-- ============ Dialog 3: Table Options (Font/Color) ============ -->
<div class="win" style="left:566px;top:314px;width:366px;height:337px;background:#cdcdcd"></div>
<div class="a" style="left:567px;top:315px;width:364px;height:25px;background:#fff"></div>
<div class="t" style="left:571px;top:321px">Table Options</div>
<svg class="a" style="left:910px;top:321px" width="12" height="12"><path d="M1 1L11 11M11 1L1 11" stroke="#000" stroke-width="1.1"/></svg>
<div class="a" style="left:574px;top:367px;width:351px;height:247px;background:#f5f5f5"></div>
<div class="a" style="left:574px;top:367px;width:349px;height:246px;background:#e3e3e3"></div>
<div class="a" style="left:574px;top:367px;width:348px;height:245px;background:#fff"></div>
<div class="a" style="left:577px;top:369px;width:344px;height:241px;background:#f0f0f0"></div>
<div class="a" style="left:575px;top:349px;width:45px;height:18px;background:#efefef;border-left:1px solid #e3e3e3;border-top:1px solid #e3e3e3;border-right:1px solid #d9d9d9"></div>
<div class="t" style="left:580px;top:353px">Format</div>
<div class="a" style="left:685px;top:349px;width:73px;height:18px;background:#efefef;border-left:1px solid #e3e3e3;border-top:1px solid #e3e3e3;border-right:1px solid #d9d9d9"></div>
<div class="t" style="left:689px;top:353px">Borders/Lines</div>
<div class="a" style="left:620px;top:347px;width:65px;height:22px;background:#f0f0f0;border:1px solid #fff;border-bottom:none"></div>
<div class="t" style="left:626px;top:352px">Font/Color</div>

<div class="t" style="left:589px;top:378px">Font:</div>
<div class="a" style="left:588px;top:393px;width:159px;height:21px;background:#fff;border:1px solid #0078d7"></div>
<div class="a" style="left:594px;top:397px;width:22px;height:12px;background:#3399ff"></div>
<div class="t" style="left:594px;top:397px;color:#fff">Arial</div><div class="a" style="left:616px;top:397px;width:1px;height:12px;background:#000"></div>
<div class="a" style="left:588px;top:414px;width:159px;height:56px;background:#fff;border:1px solid #828282"></div>
<div class="a" style="left:590px;top:416px;width:138px;height:13px;background:#3399ff"></div>
<div class="t" style="left:592px;top:416px;color:#fff">Arial</div>
<div class="t" style="left:592px;top:429px">Arial Black</div>
<div class="t" style="left:592px;top:442px">Arial Narrow</div>
<div class="t" style="left:592px;top:455px">Arial Rounded MT Bold</div>
<div class="a" style="left:729px;top:415px;width:16px;height:54px;background:#f0f0f0"></div>
<div class="a" style="left:729px;top:433px;width:15px;height:17px;background:#cdcdcd"></div>
<svg class="a" style="left:732px;top:421px" width="10" height="8"><path d="M1.5 6L5 2.5L8.5 6" fill="none" stroke="#555" stroke-width="2"/></svg><svg class="a" style="left:732px;top:456px" width="10" height="8"><path d="M1.5 2L5 5.5L8.5 2" fill="none" stroke="#555" stroke-width="2"/></svg>

<div class="t" style="left:760px;top:378px">Font Style:</div>
<div class="a" style="left:757px;top:393px;width:86px;height:21px;background:#fff;border:1px solid #0078d7"></div>
<div class="t" style="left:763px;top:397px">Regular</div>
<div class="a" style="left:757px;top:414px;width:86px;height:56px;background:#fff;border:1px solid #828282"></div>
<div class="a" style="left:759px;top:416px;width:65px;height:13px;background:#3399ff"></div>
<div class="t" style="left:761px;top:416px;color:#fff">Regular</div>
<div class="t" style="left:761px;top:429px">Bold</div>
<div class="t" style="left:761px;top:442px">Italic</div>
<div class="t" style="left:761px;top:455px">Bold Italic</div>
<div class="a" style="left:825px;top:415px;width:16px;height:54px;background:#f0f0f0"></div>
<svg class="a" style="left:828px;top:421px" width="10" height="8"><path d="M1.5 6L5 2.5L8.5 6" fill="none" stroke="#c8c8c8" stroke-width="2"/></svg><svg class="a" style="left:828px;top:456px" width="10" height="8"><path d="M1.5 2L5 5.5L8.5 2" fill="none" stroke="#c8c8c8" stroke-width="2"/></svg>

<div class="t" style="left:856px;top:378px">Size:</div>
<div class="a" style="left:855px;top:393px;width:51px;height:21px;background:#fff;border:1px solid #0078d7"></div>
<div class="t" style="left:862px;top:397px">10</div>
<div class="a" style="left:855px;top:414px;width:51px;height:56px;background:#fff;border:1px solid #828282"></div>
<div class="a" style="left:857px;top:416px;width:30px;height:13px;background:#3399ff"></div>
<div class="t" style="left:859px;top:416px;color:#fff">10</div>
<div class="t" style="left:859px;top:429px">11</div>
<div class="t" style="left:859px;top:442px">12</div>
<div class="t" style="left:859px;top:455px">14</div>
<div class="a" style="left:888px;top:415px;width:16px;height:54px;background:#f0f0f0"></div>
<div class="a" style="left:888px;top:433px;width:15px;height:17px;background:#cdcdcd"></div>
<svg class="a" style="left:891px;top:421px" width="10" height="8"><path d="M1.5 6L5 2.5L8.5 6" fill="none" stroke="#555" stroke-width="2"/></svg><svg class="a" style="left:891px;top:456px" width="10" height="8"><path d="M1.5 2L5 5.5L8.5 2" fill="none" stroke="#555" stroke-width="2"/></svg>

<div class="grp" style="left:585px;top:490px;width:78px;height:76px"></div>
<div class="t" style="left:591px;top:485px;background:#f0f0f0;padding:0 2px">Effects</div>
<div class="chk" style="left:591px;top:507px"></div>
<div class="t" style="left:606px;top:508px">Strikeout</div>
<div class="chk" style="left:591px;top:537px"></div>
<div class="t" style="left:606px;top:538px">Underline</div>

<div class="grp" style="left:670px;top:490px;width:96px;height:76px"></div>
<div class="t" style="left:676px;top:485px;background:#f0f0f0;padding:0 2px">Colors</div>
<div class="t" style="left:675px;top:510px">Text:</div>
<div class="a" style="left:702px;top:504px;width:57px;height:24px;background:#fff;border:1px solid #7a7a7a"></div>
<div class="a" style="left:706px;top:508px;width:33px;height:16px;background:#000"></div>
<svg class="a" style="left:745px;top:514px" width="10" height="6"><path d="M1 1L5 5L9 1" fill="none" stroke="#333" stroke-width="1"/></svg>
<div class="t" style="left:675px;top:539px">Fill:</div>
<div class="a" style="left:702px;top:533px;width:59px;height:24px;background:#fff;border:1px solid #7a7a7a"></div>
<svg class="a" style="left:747px;top:543px" width="10" height="6"><path d="M1 1L5 5L9 1" fill="none" stroke="#333" stroke-width="1"/></svg>

<div class="grp" style="left:774px;top:490px;width:137px;height:76px"></div>
<div class="t" style="left:780px;top:485px;background:#f0f0f0;padding:0 2px">Sample</div>
<div class="a" style="left:781px;top:501px;width:123px;height:55px;background:#fff;border-top:1px solid #a0a0a0;border-left:1px solid #a0a0a0"></div>
<div class="a" style="left:781px;top:522px;width:123px;text-align:center;font-size:13px;line-height:16px">AaBbXxYy</div>

<div class="btn def" style="left:770px;top:621px;width:73px;height:21px">OK</div>
<div class="btn" style="left:851px;top:621px;width:72px;height:21px">Cancel</div>

</body></html>
